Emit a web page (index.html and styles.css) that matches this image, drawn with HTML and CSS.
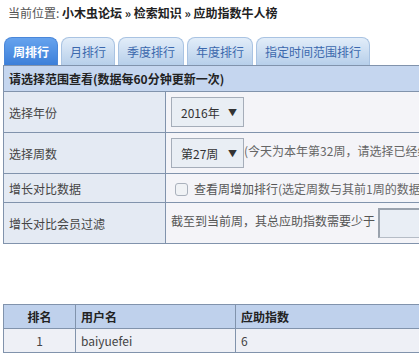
FILE: index.html
```html
<!DOCTYPE html>
<html lang="zh-CN">
<head>
    <meta charset="UTF-8">
    <title>应助指数牛人榜</title>
    <link rel="stylesheet" href="styles.css">
</head>
<body>
    <div class="page">
        <div class="crumb">
            当前位置: <b>小木虫论坛 » 检索知识 » 应助指数牛人榜</b>
        </div>

        <div class="tabs">
            <span class="tab active">周排行</span>
            <span class="tab">月排行</span>
            <span class="tab">季度排行</span>
            <span class="tab">年度排行</span>
            <span class="tab">指定时间范围排行</span>
        </div>

        <table class="filter">
            <tr>
                <th colspan="2">请选择范围查看(数据每60分钟更新一次)</th>
            </tr>
            <tr class="tall">
                <td class="label">选择年份</td>
                <td class="value">
                    <span class="select"><span>2016年</span><span class="arrow">▼</span></span>
                </td>
            </tr>
            <tr class="tall">
                <td class="label">选择周数</td>
                <td class="value">
                    <span class="select"><span>第27周</span><span class="arrow">▼</span></span><span class="hint">(今天为本年第32周，请选择已经结束的周数)</span>
                </td>
            </tr>
            <tr>
                <td class="label">增长对比数据</td>
                <td class="value">
                    <span class="check"></span>查看周增加排行<span class="hint">(选定周数与其前1周的数据对比)</span>
                </td>
            </tr>
            <tr class="tall">
                <td class="label">增长对比会员过滤</td>
                <td class="value">
                    截至到当前周，其总应助指数需要少于 <span class="input"></span>
                </td>
            </tr>
        </table>

        <table class="rank">
            <tr>
                <th class="num">排名</th>
                <th class="user">用户名</th>
                <th>应助指数</th>
            </tr>
            <tr>
                <td class="num">1</td>
                <td class="user">baiyuefei</td>
                <td>6</td>
            </tr>
        </table>
    </div>
</body>
</html>
```

FILE: styles.css
```css
body {
    margin: 0;
    font-family: "Noto Sans CJK SC", "Noto Sans", sans-serif;
    font-size: 12px;
    color: #333;
    background-color: #fff;
}
.page {
    padding-left: 3px;
    width: 720px;
}
.crumb {
    height: 26px;
    line-height: 26px;
    padding-left: 5px;
    color: #555;
}
.crumb b {
    color: #222;
}
.tabs {
    display: flex;
    gap: 3px;
    margin-top: 11px;
    padding-left: 1px;
    height: 28px;
}
.tab {
    display: flex;
    align-items: center;
    padding: 0 8px;
    border: 1px solid #a9c3e2;
    border-bottom: none;
    border-radius: 8px 8px 0 0;
    background: linear-gradient(#e2edf9, #b7cfea);
    color: #3b68ad;
}
.tab.active {
    border-color: #4a87d9;
    background: linear-gradient(#66a3ee, #3c7fd9);
    color: #fff;
    font-weight: bold;
}
table {
    border-collapse: collapse;
    width: 720px;
}
td, th {
    border: 1px solid #8193ac;
    padding: 0 5px;
    text-align: left;
}
.filter th {
    height: 25px;
    background-color: #c5d6ef;
    font-weight: bold;
    color: #222;
}
.filter td {
    height: 28px;
}
.filter tr.tall td {
    height: 40px;
}
.label {
    width: 151px;
    background-color: #e4eaf3;
    color: #444;
}
.value {
    background-color: #f4f4f8;
    color: #555;
}
.select {
    display: inline-flex;
    align-items: center;
    justify-content: space-between;
    box-sizing: border-box;
    width: 73px;
    height: 30px;
    padding: 0 6px 0 9px;
    border: 1px solid #a5adb9;
    background-color: #e9eef4;
    color: #333;
    vertical-align: middle;
}
.arrow {
    font-size: 9px;
}
.hint {
    color: #666;
}
.check {
    display: inline-block;
    box-sizing: border-box;
    width: 13px;
    height: 13px;
    margin: 0 6px 0 4px;
    border: 1px solid #aab1bc;
    border-radius: 3px;
    background-color: #f0f2f5;
    vertical-align: -2px;
}
.input {
    display: inline-block;
    box-sizing: border-box;
    width: 100px;
    height: 30px;
    border: 1px solid #b5bcc6;
    border-left: 2px solid #9aa2ad;
    border-top: 2px solid #9aa2ad;
    background-color: #e9eef5;
    vertical-align: middle;
}
.rank {
    margin-top: 60px;
}
.rank th {
    height: 23px;
    background-color: #bfd1ec;
    font-weight: bold;
    color: #222;
}
.rank td {
    height: 23px;
    background-color: #eef0f6;
    color: #444;
}
.rank .num {
    width: 61px;
    text-align: center;
}
.rank .user {
    width: 149px;
}
```
